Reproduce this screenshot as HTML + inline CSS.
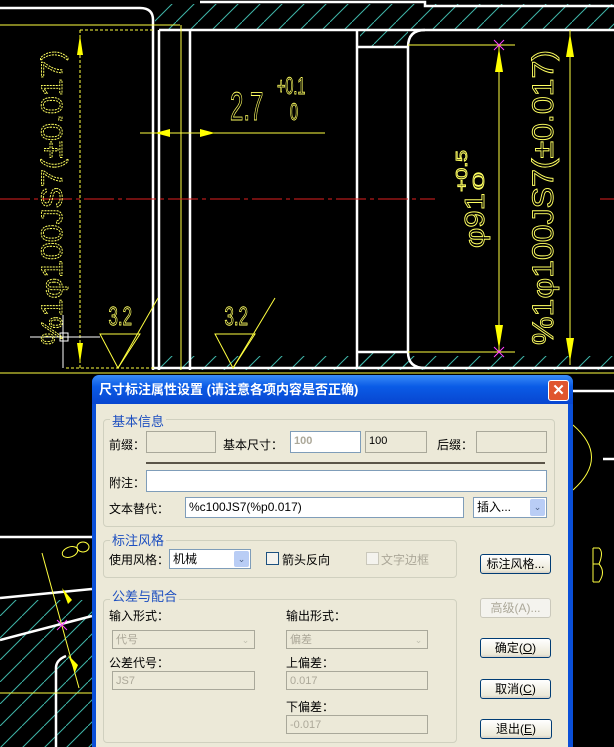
<!DOCTYPE html>
<html><head><meta charset="utf-8"><style>
html,body{margin:0;width:614px;height:747px;overflow:hidden}
body{background:#000;position:relative;font-family:"Liberation Sans","Noto Sans CJK SC","WenQuanYi Zen Hei",sans-serif;font-size:12px}
svg{position:absolute;left:0;top:0}
.dlg{position:absolute;left:92px;top:375px;width:481px;height:372px;background:#0a4fd8;border-radius:7px 7px 0 0;overflow:hidden}
.tb{position:absolute;left:0;top:0;width:481px;height:29px;background:linear-gradient(#3a8cf8,#0a5be6 40%,#0846d0);border-radius:7px 7px 0 0;color:#fff;font-weight:bold;font-size:13px;line-height:29px;padding-left:7px;box-sizing:border-box;white-space:nowrap}
.x{position:absolute;left:456px;top:5px;width:19px;height:19px;background:#e0552e;border:1px solid #fff;border-radius:3px;color:#fff;text-align:center;line-height:19px;font-size:15px;font-weight:bold}
.bd{position:absolute;left:4px;top:29px;width:472px;height:360px;background:#ECE9D8}
.a{position:absolute;white-space:nowrap}
.g{position:absolute;border:1px solid #d0d0bf;border-radius:4px}
.gt{position:absolute;color:#1d4fc0;background:#ECE9D8;padding:0 2px;font-size:13px;white-space:nowrap}
.in{position:absolute;border:1px solid #7f9db9;background:#fff;box-sizing:border-box;padding-left:3px;line-height:18px;font-size:11px;white-space:nowrap}
.dis{background:#ECE9D8;border-color:#a9a89a;color:#aca899}
.btn{position:absolute;border:1px solid #003c74;border-radius:3px;background:linear-gradient(#fff,#ece9d8 85%,#d6d0c5);text-align:center;box-sizing:border-box;line-height:18px;white-space:nowrap}
.dd{position:absolute;right:1px;top:1px;width:15px;bottom:1px;background:#b9cdf5;border-radius:2px;color:#4d6185;font-size:9px;text-align:center;line-height:17px}
.dd.d{background:#ECE9D8;color:#c0c0b0}
</style></head><body>
<svg width="614" height="747" viewBox="0 0 614 747">
<defs><pattern id="h" width="22" height="22" patternUnits="userSpaceOnUse"><path d="M0 22L22 0" stroke="#3fb5a8" stroke-width="1"/></pattern></defs>
<rect x="155" y="4" width="459" height="26" fill="url(#h)"/>
<rect x="155" y="356" width="459" height="14" fill="url(#h)"/>
<rect x="360" y="30" width="48" height="16" fill="url(#h)"/>
<rect x="360" y="353" width="48" height="15" fill="url(#h)"/>
<rect x="0" y="600" width="92" height="147" fill="url(#h)"/>
<g stroke="#fff" stroke-width="2.5" fill="none">
<path d="M0 8H140Q153 8 153 20V370"/>
<path d="M200 2H425V6H614"/>
<path d="M159 30H614"/>
<path d="M159 30V370"/><path d="M190 30V370"/>
<path d="M357 30V368"/>
<path d="M357 47H408M357 352H408"/>
<path d="M425 30Q408 30 408 47V352Q408 368 425 368"/>
<path d="M153 368H614"/>
<path d="M0 537H92"/><path d="M0 598L92 589"/><path d="M0 640L92 616"/>
<path d="M56 747V668Q56 660 66 656"/>
<path d="M573 391H614"/><path d="M603 459H614"/>
</g>
<g stroke="#ffff40" stroke-width="1" fill="none">
<path d="M0 25H180"/><path d="M181 25V370"/>
<path d="M0 373H614"/>
<path d="M80 30V368" stroke-dasharray="3 2"/>
<path d="M80 30H155M66 368H155" stroke-dasharray="3 2"/>
<path d="M140 133H325"/>
<path d="M499 45V352"/><path d="M408 45H515M408 352H515"/>
<path d="M570 30V365"/>
<path d="M42 553L79 688"/><path d="M0 693H92"/>
<path d="M100 334H140L118 368Z"/><path d="M118 368L158 298"/>
<path d="M215 334H255L233 368Z"/><path d="M233 368L275 298"/>
<path d="M573 425Q610 457 573 490"/>
<path d="M593 548V582M593 548H599Q604 552 599 564H593M599 564Q606 572 599 582H593"/>
<ellipse cx="70" cy="552" rx="8" ry="5" transform="rotate(-20 70 552)"/><ellipse cx="83" cy="547" rx="6" ry="5"/>
</g>
<g fill="#ffff00">
<path d="M155 133L170 129V137Z"/><path d="M215 133L200 129V137Z"/>
<path d="M499 48L495 72H503Z"/><path d="M499 349L495 325H503Z"/>
<path d="M570 33L566 57H574Z"/><path d="M570 362L566 338H574Z"/>
<path d="M80 35L77 55H83Z"/><path d="M80 363L77 343H83Z"/>
<path d="M72 600L62 588L68 604Z"/><path d="M75 672L68 655L78 665Z"/>
</g>
<path d="M0 199H435M600 199H614" stroke="#e02020" stroke-width="1" stroke-dasharray="30 4 4 4"/>
<g stroke="#ff40ff" stroke-width="1"><path d="M494 40L504 50M504 40L494 50M494 347L504 357M504 347L494 357M57 620L67 630M67 620L57 630"/></g>
<g stroke="#fff" stroke-width="1" fill="none"><path d="M30 337H100M63 315V368"/><rect x="60" y="333" width="8" height="8"/></g>
<g fill="none" stroke="#ffff60" stroke-width="0.9" font-family="Liberation Sans">
<text x="0" y="0" font-size="40" transform="translate(230,120) scale(0.6,1)">2.7</text>
<text x="0" y="0" font-size="24" transform="translate(290,120) scale(0.6,1)">0</text>
<text x="0" y="0" font-size="24" transform="translate(277,94) scale(0.6,1)">+0.1</text>
<text x="0" y="0" font-size="26" transform="translate(132,325) scale(0.65,1)" text-anchor="end">3.2</text>
<text x="0" y="0" font-size="26" transform="translate(248,325) scale(0.65,1)" text-anchor="end">3.2</text>
<text transform="translate(553,345) rotate(-90)" font-size="30" textLength="295" lengthAdjust="spacingAndGlyphs">%1φ100JS7(±0.017)</text>
<text transform="translate(62,345) rotate(-90)" font-size="30" textLength="295" lengthAdjust="spacingAndGlyphs" stroke-dasharray="2 1">%1φ100JS7(±0.017)</text>
<text transform="translate(484,248) rotate(-90)" font-size="28" textLength="55" lengthAdjust="spacingAndGlyphs">φ91</text>
<text transform="translate(484,190) rotate(-90)" font-size="16" textLength="18" lengthAdjust="spacingAndGlyphs">0</text>
<text transform="translate(467,192) rotate(-90)" font-size="16" textLength="42" lengthAdjust="spacingAndGlyphs">+0.5</text>
</g>
</svg>
<div class="dlg">
<div class="tb">尺寸标注属性设置 (请注意各项内容是否正确)<div class="x">✕</div></div>
<div class="bd"></div>
</div>
<div style="position:absolute;left:0;top:0">
<div class="g" style="left:103px;top:419px;width:450px;height:106px"></div>
<div class="gt" style="left:110px;top:411px">基本信息</div>
<div class="a" style="left:109px;top:436px">前缀：</div>
<div class="in dis" style="left:146px;top:431px;width:70px;height:22px"></div>
<div class="a" style="left:223px;top:436px">基本尺寸：</div>
<div class="in" style="left:290px;top:431px;width:71px;height:22px;color:#aca899;font-weight:bold">100</div>
<div class="in dis" style="left:365px;top:431px;width:62px;height:22px;color:#000">100</div>
<div class="a" style="left:437px;top:436px">后缀：</div>
<div class="in dis" style="left:476px;top:431px;width:71px;height:22px"></div>
<div style="position:absolute;left:146px;top:462px;width:399px;height:2px;background:#5a5448"></div>
<div class="a" style="left:109px;top:474px">附注：</div>
<div class="in" style="left:146px;top:470px;width:401px;height:22px"></div>
<div class="a" style="left:109px;top:500px">文本替代：</div>
<div class="in" style="left:185px;top:497px;width:279px;height:21px;font-size:12px">%c100JS7(%p0.017)</div>
<div class="in" style="left:473px;top:497px;width:74px;height:21px;font-size:12px">插入...<div class="dd">⌄</div></div>
<div class="g" style="left:103px;top:540px;width:352px;height:36px"></div>
<div class="gt" style="left:110px;top:530px">标注风格</div>
<div class="a" style="left:109px;top:551px">使用风格：</div>
<div class="in" style="left:169px;top:549px;width:82px;height:20px;font-size:12px">机械<div class="dd">⌄</div></div>
<div style="position:absolute;left:266px;top:552px;width:11px;height:11px;border:1px solid #1c5180;background:#f4f3ee"></div>
<div class="a" style="left:282px;top:551px">箭头反向</div>
<div style="position:absolute;left:366px;top:552px;width:11px;height:11px;border:1px solid #cac8bb;background:#f4f3ee"></div>
<div class="a" style="left:381px;top:551px;color:#aca899">文字边框</div>
<div class="btn" style="left:480px;top:554px;width:71px;height:20px">标注风格...</div>
<div class="g" style="left:103px;top:599px;width:352px;height:142px"></div>
<div class="gt" style="left:110px;top:586px">公差与配合</div>
<div class="a" style="left:109px;top:607px">输入形式：</div>
<div class="in dis" style="left:112px;top:630px;width:143px;height:19px">代号<div class="dd d">⌄</div></div>
<div class="a" style="left:286px;top:607px">输出形式：</div>
<div class="in dis" style="left:286px;top:630px;width:142px;height:19px">偏差<div class="dd d">⌄</div></div>
<div class="a" style="left:109px;top:654px">公差代号：</div>
<div class="in dis" style="left:112px;top:671px;width:143px;height:19px">JS7</div>
<div class="a" style="left:286px;top:654px">上偏差：</div>
<div class="in dis" style="left:286px;top:671px;width:142px;height:19px">0.017</div>
<div class="a" style="left:286px;top:698px">下偏差：</div>
<div class="in dis" style="left:286px;top:715px;width:142px;height:19px">-0.017</div>
<div class="btn" style="left:480px;top:598px;width:71px;height:20px;border-color:#cac8bb;color:#aca899;background:#f4f3ee">高级(A)...</div>
<div class="btn" style="left:480px;top:638px;width:71px;height:20px">确定(<u>O</u>)</div>
<div class="btn" style="left:480px;top:679px;width:71px;height:20px">取消(<u>C</u>)</div>
<div class="btn" style="left:480px;top:719px;width:72px;height:20px">退出(<u>E</u>)</div>
</div>
</body></html>
